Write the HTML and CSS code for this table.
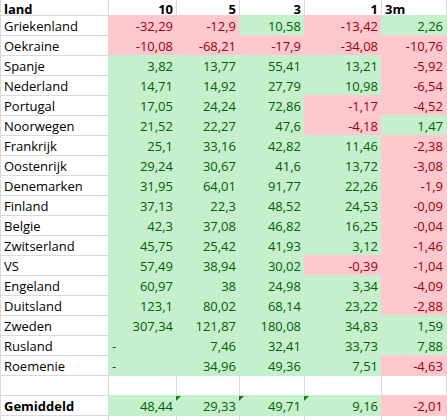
FILE: index.html
```html
<!DOCTYPE html>
<html lang="nl">
<head>
    <meta charset="UTF-8">
    <title>Rendement per land</title>
    <link rel="stylesheet" href="styles.css">
</head>
<body>
    <div class="sheet">
        <table class="grid">
            <colgroup>
                <col class="c-land">
                <col class="c-10">
                <col class="c-5">
                <col class="c-3">
                <col class="c-1">
                <col class="c-3m">
            </colgroup>
            <tr class="head">
                <td><span>land</span></td>
                <td class="num"><span>10</span></td>
                <td class="num"><span>5</span></td>
                <td class="num"><span>3</span></td>
                <td class="num"><span>1</span></td>
                <td><span>3m</span></td>
            </tr>
            <tr><td>Griekenland</td><td class="num neg">-32,29</td><td class="num neg">-12,9</td><td class="num pos">10,58</td><td class="num neg">-13,42</td><td class="num pos">2,26</td></tr>
            <tr><td>Oekraine</td><td class="num neg">-10,08</td><td class="num neg">-68,21</td><td class="num neg">-17,9</td><td class="num neg">-34,08</td><td class="num neg">-10,76</td></tr>
            <tr><td>Spanje</td><td class="num pos">3,82</td><td class="num pos">13,77</td><td class="num pos">55,41</td><td class="num pos">13,21</td><td class="num neg">-5,92</td></tr>
            <tr><td>Nederland</td><td class="num pos">14,71</td><td class="num pos">14,92</td><td class="num pos">27,79</td><td class="num pos">10,98</td><td class="num neg">-6,54</td></tr>
            <tr><td>Portugal</td><td class="num pos">17,05</td><td class="num pos">24,24</td><td class="num pos">72,86</td><td class="num neg">-1,17</td><td class="num neg">-4,52</td></tr>
            <tr><td>Noorwegen</td><td class="num pos">21,52</td><td class="num pos">22,27</td><td class="num pos">47,6</td><td class="num neg">-4,18</td><td class="num pos">1,47</td></tr>
            <tr><td>Frankrijk</td><td class="num pos">25,1</td><td class="num pos">33,16</td><td class="num pos">42,82</td><td class="num pos">11,46</td><td class="num neg">-2,38</td></tr>
            <tr><td>Oostenrijk</td><td class="num pos">29,24</td><td class="num pos">30,67</td><td class="num pos">41,6</td><td class="num pos">13,72</td><td class="num neg">-3,08</td></tr>
            <tr><td>Denemarken</td><td class="num pos">31,95</td><td class="num pos">64,01</td><td class="num pos">91,77</td><td class="num pos">22,26</td><td class="num neg">-1,9</td></tr>
            <tr><td>Finland</td><td class="num pos">37,13</td><td class="num pos">22,3</td><td class="num pos">48,52</td><td class="num pos">24,53</td><td class="num neg">-0,09</td></tr>
            <tr><td>Belgie</td><td class="num pos">42,3</td><td class="num pos">37,08</td><td class="num pos">46,82</td><td class="num pos">16,25</td><td class="num neg">-0,04</td></tr>
            <tr><td>Zwitserland</td><td class="num pos">45,75</td><td class="num pos">25,42</td><td class="num pos">41,93</td><td class="num pos">3,12</td><td class="num neg">-1,46</td></tr>
            <tr><td>VS</td><td class="num pos">57,49</td><td class="num pos">38,94</td><td class="num pos">30,02</td><td class="num neg">-0,39</td><td class="num neg">-1,04</td></tr>
            <tr><td>Engeland</td><td class="num pos">60,97</td><td class="num pos">38</td><td class="num pos">24,98</td><td class="num pos">3,34</td><td class="num neg">-4,09</td></tr>
            <tr><td>Duitsland</td><td class="num pos">123,1</td><td class="num pos">80,02</td><td class="num pos">68,14</td><td class="num pos">23,22</td><td class="num neg">-2,88</td></tr>
            <tr><td>Zweden</td><td class="num pos">307,34</td><td class="num pos">121,87</td><td class="num pos">180,08</td><td class="num pos">34,83</td><td class="num pos">1,59</td></tr>
            <tr><td>Rusland</td><td class="pos dash">-</td><td class="num pos">7,46</td><td class="num pos">32,41</td><td class="num pos">33,73</td><td class="num pos">7,88</td></tr>
            <tr><td>Roemenie</td><td class="pos dash">-</td><td class="num pos">34,96</td><td class="num pos">49,36</td><td class="num pos">7,51</td><td class="num neg">-4,63</td></tr>
            <tr><td></td><td></td><td></td><td></td><td></td><td></td></tr>
            <tr class="total">
                <td class="label">Gemiddeld</td>
                <td class="num pos">48,44</td>
                <td class="num pos warn">29,33</td>
                <td class="num pos warn">49,71</td>
                <td class="num pos warn">9,16</td>
                <td class="num neg">-2,01</td>
            </tr>
            <tr><td></td><td></td><td></td><td></td><td></td><td></td></tr>
        </table>
    </div>
</body>
</html>
```

FILE: styles.css
```css
* {
    margin: 0;
    padding: 0;
    box-sizing: border-box;
}

body {
    font-family: "Open Sans", "Liberation Sans", sans-serif;
    font-size: 13px;
    color: #000;
    background: #fff;
    overflow: hidden;
}

.sheet {
    width: 447px;
    height: 420px;
    overflow: hidden;
}

.grid {
    border-collapse: separate;
    border-spacing: 0;
    table-layout: fixed;
    width: 447px;
}

.c-land { width: 109px; }
.c-10 { width: 68px; }
.c-5 { width: 63px; }
.c-3 { width: 65px; }
.c-1 { width: 77px; }
.c-3m { width: 65px; }

.grid tr {
    height: 20px;
}

.grid td {
    height: 20px;
    padding: 2px 3px 0 3px;
    line-height: 17px;
    white-space: nowrap;
    border-right: 1px solid #dadada;
    border-bottom: 1px solid #dadada;
    position: relative;
}

.grid td:first-child {
    border-left: 1px solid #dadada;
    padding-left: 3px;
}

/* first sheet row is scrolled partly out of view */
.grid .head {
    height: 16px;
}

.head td {
    height: 16px;
    padding-top: 0;
    vertical-align: top;
}

.head td span {
    display: block;
    height: 15px;
    line-height: 18px;
}

.head td,
.total .label {
    font-weight: 700;
}

.num {
    text-align: right;
}

/* conditional formatting fills cover the gridlines */
.pos {
    background: #c6efce;
    color: #006100;
    border-color: #c6efce !important;
    box-shadow: -1px 0 0 #c6efce, 0 -1px 0 #c6efce, -1px -1px 0 #c6efce;
}

.neg {
    background: #ffc7ce;
    color: #9c0006;
    border-color: #ffc7ce !important;
    box-shadow: -1px 0 0 #ffc7ce, 0 -1px 0 #ffc7ce, -1px -1px 0 #ffc7ce;
}

.dash {
    text-align: left;
    padding-left: 4px;
}

/* excel error marker */
.warn::before {
    content: "";
    position: absolute;
    left: -1px;
    top: 0;
    border-top: 5px solid #1a7a1a;
    border-right: 5px solid transparent;
}
```
